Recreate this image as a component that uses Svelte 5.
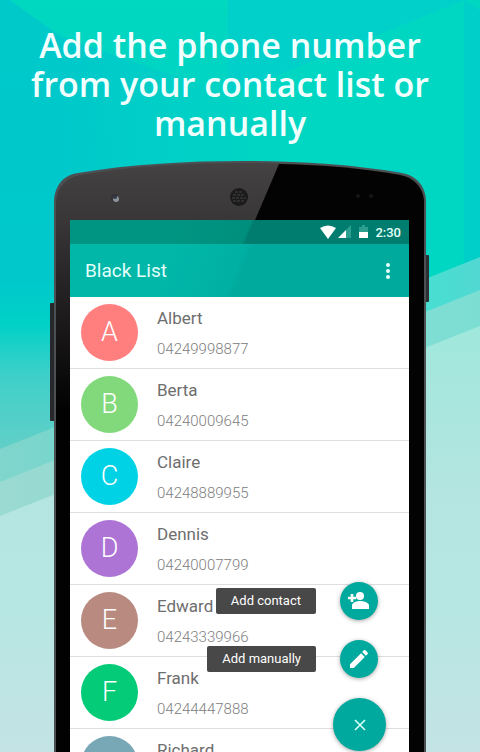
<script>
    let contacts = $state([
        { name: "Albert", phone: "04249998877", color: "#ff7e7e" },
        { name: "Berta", phone: "04240009645", color: "#82d97c" },
        { name: "Claire", phone: "04248889955", color: "#00d2e6" },
        { name: "Dennis", phone: "04240007799", color: "#ad74d6" },
        { name: "Edward", phone: "04243339966", color: "#b98a80" },
        { name: "Frank", phone: "04244447888", color: "#03cb77" },
        { name: "Richard", phone: "", color: "#78a8b5" },
    ]);
    let menuOpen = $state(true);
</script>

<div class="page">
    <svg
        class="backdrop"
        viewBox="0 0 480 752"
        preserveAspectRatio="none"
        aria-hidden="true"
    >
        <defs>
            <linearGradient id="sky" x1="0" y1="0" x2="0" y2="1">
                <stop offset="0" stop-color="#00c9ca" />
                <stop offset="0.37" stop-color="#00c8cb" />
                <stop offset="0.43" stop-color="#00d1c7" />
                <stop offset="0.5" stop-color="#3fd0c9" />
                <stop offset="0.6" stop-color="#62cfc7" />
            </linearGradient>
            <linearGradient id="wedge" x1="0" y1="0" x2="0" y2="1">
                <stop offset="0" stop-color="#00d8bf" />
                <stop offset="1" stop-color="#00d3c4" />
            </linearGradient>
            <linearGradient
                id="glow"
                gradientUnits="userSpaceOnUse"
                x1="60"
                y1="0"
                x2="300"
                y2="0"
            >
                <stop offset="0" stop-color="#00d7c2" stop-opacity="0" />
                <stop offset="1" stop-color="#00d7c2" />
            </linearGradient>
            <linearGradient id="band1" x1="0" y1="0" x2="1" y2="0">
                <stop offset="0" stop-color="#80d5cc" />
                <stop offset="0.88" stop-color="#47dfd2" />
                <stop offset="1" stop-color="#51d8d2" />
            </linearGradient>
            <linearGradient id="band2" x1="0" y1="0" x2="1" y2="0">
                <stop offset="0" stop-color="#9adad2" />
                <stop offset="1" stop-color="#7cded3" />
            </linearGradient>
            <linearGradient
                id="ground"
                gradientUnits="userSpaceOnUse"
                x1="0"
                y1="320"
                x2="0"
                y2="752"
            >
                <stop offset="0" stop-color="#9fe8dc" />
                <stop offset="0.4" stop-color="#b4e5e0" />
                <stop offset="0.65" stop-color="#b6e7e2" />
                <stop offset="1" stop-color="#c4e3e4" />
            </linearGradient>
        </defs>
        <rect width="480" height="752" fill="url(#sky)" />
        <path d="M228 0H480V100H228Z" fill="#00cfca" />
        <path d="M10 0H228V95L60 36Z" fill="url(#wedge)" />
        <path d="M464 0L228 95L60 36L20 170H480V0Z" fill="url(#glow)" />
        <path d="M400 160H480V300H400Z" fill="#00d7c2" />
        <path d="M464 0L480 10V280H464Z" fill="#00cfc9" />
        <path d="M0 449L480 257V752H0Z" fill="url(#band1)" />
        <path d="M0 482L480 290V752H0Z" fill="url(#band2)" />
        <path d="M0 516L480 326V752H0Z" fill="url(#ground)" />
    </svg>

    <h1>Add the phone number from your contact list or manually</h1>

    <div class="phone">
        <svg
            class="shell"
            viewBox="0 0 380 592"
            preserveAspectRatio="none"
            aria-hidden="true"
        >
            <defs>
                <linearGradient id="body" x1="0" y1="0" x2="0" y2="1">
                    <stop offset="0" stop-color="#454243" />
                    <stop offset="0.1" stop-color="#393637" />
                    <stop offset="0.22" stop-color="#242122" />
                    <stop offset="0.42" stop-color="#020202" />
                </linearGradient>
            </defs>
            <rect x="0" y="143" width="6" height="118" rx="1" fill="#26282c" />
            <rect x="374" y="95" width="5" height="47" rx="1" fill="#2c3033" />
            <path
                d="M4 592V42C4 28 12 15 28 13C80 4 140 1 192 1C245 1 300 4 352 13C368 16 376 28 376 42V592Z"
                fill="#4c5052"
            />
            <path
                d="M6 592V43C6 30 14 18 30 15C80 6 140 3 192 3C245 3 300 6 350 15C366 18 374 30 374 43V592Z"
                fill="url(#body)"
            />
            <path
                d="M229 4C275 5 310 8 350 15C366 18 374 30 374 43V592H200V72Z"
                fill="#030303"
            />
            <circle cx="65" cy="38" r="4" fill="#333335" />
            <circle cx="66" cy="39" r="3" fill="#8e949b" />
            <circle cx="65" cy="37" r="2" fill="#303746" />
            <circle cx="189" cy="37" r="9" fill="#1b1b1c" />
            <path
                d="M185 32h8M183 35h12M182 38h14M183 41h12"
                stroke="#444445"
                stroke-dasharray="3 1"
            />
            <circle cx="308" cy="36" r="2" fill="#171717" />
            <circle cx="321" cy="36" r="2" fill="#171717" />
        </svg>

        <div class="screen">
            <div class="status">
                <svg width="50" height="16" viewBox="0 0 50 16" aria-hidden="true">
                    <path d="M0 4Q8 -1 16 4L8 15Z" fill="#fff" />
                    <path d="M31 1V14H18Z" fill="#2d9f91" />
                    <path d="M26 6V14H18Z" fill="#fff" />
                    <path d="M39 3H42V1H45V3H48V14H39Z" fill="#2d9f91" />
                    <path d="M39 8H48V14H39Z" fill="#fff" />
                </svg>
                <span>2:30</span>
            </div>

            <header>
                <h2>Black List</h2>
                <button type="button" class="more" aria-label="More options">
                    <svg width="6" height="16" viewBox="0 0 6 16">
                        <circle cx="3" cy="2" r="2" />
                        <circle cx="3" cy="8" r="2" />
                        <circle cx="3" cy="14" r="2" />
                    </svg>
                </button>
            </header>

            <ul>
                {#each contacts as contact}
                    <li>
                        <div class="avatar" style="background: {contact.color}">
                            {contact.name[0]}
                        </div>
                        <div class="details">
                            <p class="name">{contact.name}</p>
                            <p class="number">{contact.phone}</p>
                        </div>
                    </li>
                {/each}
            </ul>

            <div class="actions">
                {#if menuOpen}
                    <div class="action">
                        <label for="add-contact">Add contact</label>
                        <button type="button" id="add-contact" class="fab mini">
                            <svg width="24" height="24" viewBox="0 0 24 24">
                                <circle cx="13" cy="7" r="4" />
                                <path
                                    d="M13 12c-3 0-8 1.4-8 4.4V20h17v-3.6c0-3-6-4.4-9-4.4z"
                                />
                                <path
                                    d="M3.7 5h2.6v2.7H9v2.6H6.3V13H3.7v-2.7H1V7.7h2.7z"
                                />
                            </svg>
                        </button>
                    </div>
                    <div class="action">
                        <label for="add-manually">Add manually</label>
                        <button type="button" id="add-manually" class="fab mini">
                            <svg width="24" height="24" viewBox="0 0 24 24">
                                <path
                                    d="M3 17.25V21h3.75L17.81 9.94l-3.75-3.75L3 17.25zM20.71 7.04c.39-.39.39-1.02 0-1.41l-2.34-2.34c-.39-.39-1.02-.39-1.41 0l-1.83 1.83 3.75 3.75 1.83-1.83z"
                                />
                            </svg>
                        </button>
                    </div>
                {/if}
                <button
                    type="button"
                    class="fab"
                    aria-label="Toggle menu"
                    onclick={() => (menuOpen = !menuOpen)}
                >
                    <svg width="12" height="12" viewBox="0 0 12 12">
                        <path d="M1 1L11 11M11 1L1 11" stroke="#d8fff9" stroke-width="1.6" />
                    </svg>
                </button>
            </div>
        </div>
    </div>
</div>

<style>
    :global(body) {
        margin: 0;
    }

    .page {
        position: relative;
        display: flex;
        flex-direction: column;
        height: 100vh;
        overflow: hidden;
        font-family: Roboto, sans-serif;
    }

    .backdrop {
        position: absolute;
        inset: 0;
        width: 100%;
        height: 100%;
    }

    h1 {
        position: relative;
        margin: 0;
        padding: 26px 36px 17px 16px;
        color: #f2ffff;
        font-family: "Trebuchet MS", "Open Sans", sans-serif;
        font-size: 34px;
        font-weight: 600;
        line-height: 39px;
        text-align: center;
    }

    .phone {
        position: relative;
        display: flex;
        flex: 1;
        min-height: 0;
        margin: 0 50px;
        padding: 60px 21px 0 20px;
    }

    .shell {
        position: absolute;
        inset: 0;
        width: 100%;
        height: 100%;
    }

    .screen {
        position: relative;
        flex: 1;
        overflow: hidden;
        background: #fff;
    }

    .status {
        display: flex;
        align-items: center;
        justify-content: flex-end;
        gap: 5px;
        height: 24px;
        padding: 0 8px;
        background: linear-gradient(113deg, #009582 30%, #008f7d 52%, #007d6e 53%);
        color: #e4fffb;
        font-size: 13px;
        font-weight: 500;
    }

    header {
        display: flex;
        align-items: center;
        justify-content: space-between;
        height: 53px;
        padding: 0 16px 0 15px;
        background: linear-gradient(113deg, #00b7a8 30%, #00b0a2 49%, #00aa9d 51%);
        color: #e4fffb;
    }

    h2 {
        margin: 0;
        font-size: 19px;
        font-weight: 400;
    }

    .more {
        display: flex;
        padding: 0 2px;
        border: 0;
        background: none;
        fill: #e4fffb;
    }

    ul {
        margin: 0;
        padding: 0;
        list-style: none;
    }

    li {
        display: flex;
        align-items: center;
        gap: 19px;
        box-sizing: border-box;
        height: 72px;
        padding: 0 11px;
        border-bottom: 1px solid #dedede;
    }

    .avatar {
        width: 57px;
        height: 57px;
        border-radius: 50%;
        color: #fff;
        font-size: 27px;
        font-weight: 300;
        line-height: 57px;
        text-align: center;
    }

    .details {
        padding-top: 2px;
    }

    .details p {
        height: 31px;
        margin: 0;
        line-height: 31px;
    }

    .name {
        color: #6e6e6e;
        font-size: 17px;
    }

    .number {
        color: #808080;
        font-size: 15px;
        font-weight: 300;
    }

    .actions {
        position: absolute;
        right: 23px;
        bottom: 1px;
        display: flex;
        flex-direction: column;
        align-items: flex-end;
        gap: 20px;
    }

    .action {
        display: flex;
        align-items: center;
        gap: 24px;
        padding-right: 8px;
    }

    label {
        padding: 0 15px;
        border-radius: 2px;
        background: #484848;
        color: #fff;
        font-size: 13px;
        line-height: 26px;
    }

    .fab {
        display: flex;
        align-items: center;
        justify-content: center;
        width: 53px;
        height: 53px;
        padding: 0;
        border: 0;
        border-radius: 50%;
        background: #00a99d;
        box-shadow: 0 1px 4px rgba(0, 0, 0, 0.35);
        fill: #fff;
    }

    .mini {
        width: 38px;
        height: 38px;
    }
</style>
